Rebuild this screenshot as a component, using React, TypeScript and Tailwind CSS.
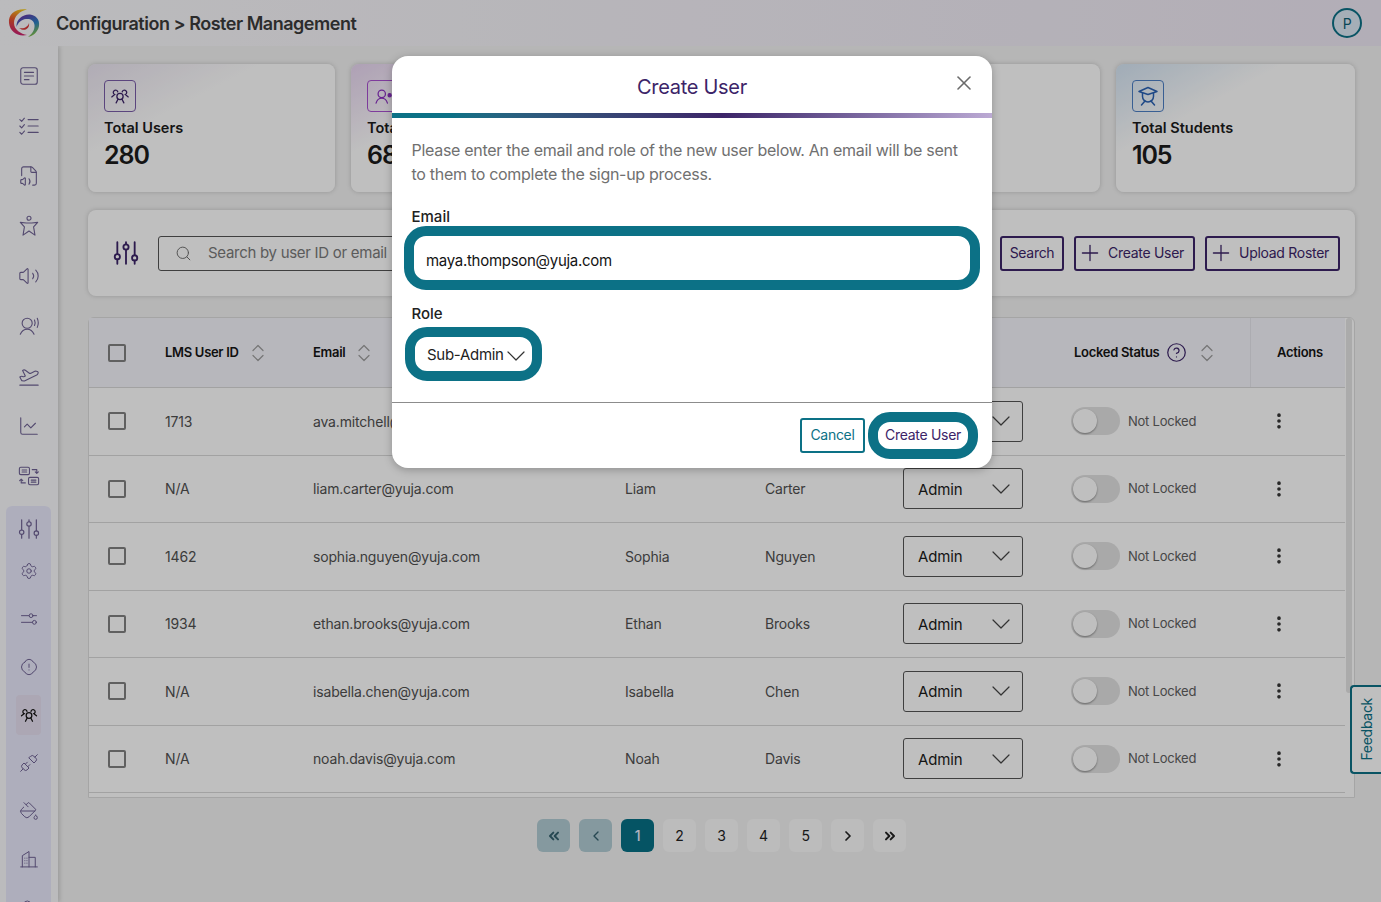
import React from 'react';
import {
    ChartLine,
    ChevronDown,
    ChevronLeft,
    ChevronRight,
    ChevronsLeft,
    ChevronsRight,
    CircleHelp,
    EllipsisVertical,
    FileVolume,
    PaintBucket,
    PlaneTakeoff,
    Plus,
    Search,
    Settings,
    Unplug,
    Volume2,
    X,
} from 'lucide-react';

type IconProps = { className?: string; strokeWidth?: number };

function GroupIcon({ className, strokeWidth = 1.4 }: IconProps) {
    return (
        <svg viewBox="0 0 24 24" fill="none" stroke="currentColor" strokeWidth={strokeWidth} strokeLinecap="round" className={className}>
            <circle cx="12" cy="12.500" r="3.400" />
            <path d="M9.800 15.500 7.800 19.500M14.200 15.500l2 4" />
            <path d="M9.600 7.600A2.500 2.500 0 1 0 6.200 10.400L3 13" />
            <path d="M14.400 7.600a2.500 2.500 0 1 1 3.400 2.800L21 13" />
        </svg>
    );
}

function PersonStarIcon({ className, strokeWidth = 1.4 }: IconProps) {
    return (
        <svg viewBox="0 0 24 24" fill="none" stroke="currentColor" strokeWidth={strokeWidth} strokeLinecap="round" className={className}>
            <circle cx="10" cy="9" r="4.200" />
            <path d="M3.500 19.500c1-3.500 3.400-5.500 6.500-5.500s5.500 2 6.500 5.500" />
            <circle cx="19" cy="10.500" r="1.800" fill="currentColor" />
        </svg>
    );
}

function StudentIcon({ className }: IconProps) {
    return (
        <svg viewBox="0 0 24 24" fill="none" stroke="currentColor" strokeWidth="1.500" strokeLinecap="round" strokeLinejoin="round" className={className}>
            <path d="M3 7.500 12 3.500l9 4-9 3z" />
            <path d="M6.500 9v3.500a5.500 5.500 0 0 0 11 0V9" />
            <path d="M9 17 5.500 21M15 17l3.500 4" />
        </svg>
    );
}

function SwapDocsIcon({ className, strokeWidth = 1.200 }: IconProps) {
    return (
        <svg viewBox="0 0 24 24" fill="none" stroke="currentColor" strokeWidth={strokeWidth} strokeLinecap="round" strokeLinejoin="round" className={className}>
            <rect x="1.500" y="2.500" width="11" height="8" rx="1.500" />
            <rect x="11.500" y="13.500" width="11" height="8" rx="1.500" />
            <path d="M4.500 5.500h5M4.500 7.700h5M14.500 16.500h5M14.500 18.700h5" />
            <path d="M15.500 5h5v4M18.800 7.500l1.700 1.700 1.700-1.700" />
            <path d="M8 19.500H3.500v-4M1.800 17l1.700-1.700L5.200 17" />
        </svg>
    );
}

function SpeakerPersonIcon({ className, strokeWidth = 1.300 }: IconProps) {
    return (
        <svg viewBox="0 0 24 24" fill="none" stroke="currentColor" strokeWidth={strokeWidth} strokeLinecap="round" className={className}>
            <circle cx="10" cy="9" r="5.500" />
            <path d="M2.500 21c1.500-3.500 4-5.500 7.500-5.500s6 2 7.500 5.500" />
            <path d="M18 5.500c.9 2 .9 4 0 6M21 3.500c1.400 3.200 1.400 6.800 0 10" />
        </svg>
    );
}

function NotesIcon({ className, strokeWidth = 1.300 }: IconProps) {
    return (
        <svg viewBox="0 0 24 24" fill="none" stroke="currentColor" strokeWidth={strokeWidth} strokeLinecap="round" className={className}>
            <rect x="3" y="3" width="18" height="18" rx="2.500" />
            <path d="M7 8h10M7 12h10M7 16h5" />
        </svg>
    );
}

function ChecklistIcon({ className, strokeWidth = 1.300 }: IconProps) {
    return (
        <svg viewBox="0 0 24 24" fill="none" stroke="currentColor" strokeWidth={strokeWidth} strokeLinecap="round" strokeLinejoin="round" className={className}>
            <path d="M11 5h11M11 12h11M11 19h11" />
            <path d="m2 5 2 2 3-3.500M2 12l2 2 3-3.500M2 19l2 2 3-3.500" />
        </svg>
    );
}

function AccessIcon({ className, strokeWidth = 1.300 }: IconProps) {
    return (
        <svg viewBox="0 0 24 24" fill="none" stroke="currentColor" strokeWidth={strokeWidth} strokeLinecap="round" strokeLinejoin="round" className={className}>
            <circle cx="12" cy="3.500" r="2.200" />
            <path d="M2.500 8 9 8.700h6l6.500-.7-4.500 5 1.500 9L12 17.500 5.500 22 7 13z" />
        </svg>
    );
}

function SlidersIcon({ className, strokeWidth = 1.300 }: IconProps) {
    return (
        <svg viewBox="0 0 24 24" fill="none" stroke="currentColor" strokeWidth={strokeWidth} strokeLinecap="round" className={className}>
            <path d="M4 2v11M4 18v4M12 2v2M12 9v13M20 2v12M20 19v3" />
            <circle cx="4" cy="15.500" r="2.400" />
            <circle cx="12" cy="6.500" r="2.400" />
            <circle cx="20" cy="16.500" r="2.400" />
        </svg>
    );
}

function TunerIcon({ className, strokeWidth = 1.300 }: IconProps) {
    return (
        <svg viewBox="0 0 24 24" fill="none" stroke="currentColor" strokeWidth={strokeWidth} strokeLinecap="round" className={className}>
            <path d="M3 8h9M17 8h4M3 16h13M21 16h0" />
            <circle cx="14.500" cy="8" r="2.300" />
            <circle cx="18.500" cy="16" r="2.300" />
        </svg>
    );
}

function AlertBadgeIcon({ className, strokeWidth = 1.300 }: IconProps) {
    return (
        <svg viewBox="0 0 24 24" fill="none" stroke="currentColor" strokeWidth={strokeWidth} strokeLinecap="round" strokeLinejoin="round" className={className}>
            <path d="M7 6a5.500 5.500 0 0 1 10 0 6.500 6.500 0 0 1 0 12 5.500 5.500 0 0 1-10 0 6.500 6.500 0 0 1 0-12z" />
            <path d="M12 8.500v4M12 15.500v.1" />
        </svg>
    );
}

function CampusIcon({ className, strokeWidth = 1.200 }: IconProps) {
    return (
        <svg viewBox="0 0 24 24" fill="none" stroke="currentColor" strokeWidth={strokeWidth} strokeLinecap="round" strokeLinejoin="round" className={className}>
            <path d="M2 21.500h20M4 21.500V8l8-5v18.500M12 10h7.500v11.500" />
            <path d="M7 11h.1M9.500 11h.1M7 14h.1M9.500 14h.1M7 17h.1M9.500 17h.1" />
        </svg>
    );
}

function YujaLogo() {
    return (
        <svg viewBox="0 0 32 30" className="h-[30px] w-[32px]">
            <defs>
                <linearGradient id="warm" x1="0.700" y1="0" x2="0.500" y2="1">
                    <stop offset="0" stopColor="#f2c81c" />
                    <stop offset="0.450" stopColor="#e8562a" />
                    <stop offset="1" stopColor="#c81e78" />
                </linearGradient>
                <linearGradient id="cool" x1="0.200" y1="0" x2="0.700" y2="1">
                    <stop offset="0" stopColor="#6a2fa6" />
                    <stop offset="0.550" stopColor="#2a7fc4" />
                    <stop offset="1" stopColor="#8cc63f" />
                </linearGradient>
            </defs>
            <path d="M19 1.500C8 0 0 6 1 15c1 9 9 14 18 12-6-1-13-5-13-12C6 8 12 3 19 1.500Z" fill="url(#warm)" />
            <path d="M8.500 19C8 11 15 6 22 6.500c6 .5 10 5.500 9 11.500-1 6-6 10-11 11 4-3 7-7 6.500-12C26 12 22 10.500 18 11c-5 .5-8 4-9.500 8Z" fill="url(#cool)" />
            <path d="M11 20c5 1 9-1 10-5 1 5-4 9.500-10 5Z" fill="#d83a3a" />
        </svg>
    );
}

function SortIcon() {
    return (
        <svg viewBox="0 0 12 18" className="h-[18px] w-3 shrink-0" fill="none" stroke="#9c9c9c" strokeWidth="1.200" strokeLinecap="round" strokeLinejoin="round">
            <path d="M1 6.500 6 1.500l5 5" />
            <path d="M1 11.500l5 5 5-5" />
        </svg>
    );
}

function StatCard({ label, value, width, tint, iconClass, icon }: { label: string; value: string; width: string; tint: string; iconClass: string; icon?: React.ReactNode }) {
    return (
        <div className={`h-[128px] rounded-lg px-4 pt-4 shadow-[0_0_5px_rgba(0,0,0,0.18)] ${width} ${tint}`}>
            {icon && <div className={`flex h-8 w-8 items-center justify-center rounded-[4px] border ${iconClass}`}>{icon}</div>}
            {label && <div className="mt-[5px] text-[14.500px] leading-[22px] font-semibold tracking-normal text-[#1b1b1b]">{label}</div>}
            {value && <div className="mt-[1px] text-[25px] leading-[30px] font-semibold tracking-[-1.100px] text-[#1b1b1b]">{value}</div>}
        </div>
    );
}

function OutlineButton({ children, className }: { children: React.ReactNode; className?: string }) {
    return (
        <button className={`flex h-[35px] items-center rounded-[3px] border-2 border-[#3c2468] pb-[2px] text-[14px] text-[#3c2468] ${className}`}>
            {children}
        </button>
    );
}

const rows = [
    { id: '1713', email: 'ava.mitchell@yuja.com', first: 'Ava', last: 'Mitchell' },
    { id: 'N/A', email: 'liam.carter@yuja.com', first: 'Liam', last: 'Carter' },
    { id: '1462', email: 'sophia.nguyen@yuja.com', first: 'Sophia', last: 'Nguyen' },
    { id: '1934', email: 'ethan.brooks@yuja.com', first: 'Ethan', last: 'Brooks' },
    { id: 'N/A', email: 'isabella.chen@yuja.com', first: 'Isabella', last: 'Chen' },
    { id: 'N/A', email: 'noah.davis@yuja.com', first: 'Noah', last: 'Davis' },
];

const rowGrid = 'grid grid-cols-[76px_148px_312px_140px_138px_168px_179px_1fr] items-center';

const topNav = [NotesIcon, ChecklistIcon, FileVolume, AccessIcon, Volume2, SpeakerPersonIcon, PlaneTakeoff, ChartLine, SwapDocsIcon];
const bottomNav = [TunerIcon, AlertBadgeIcon, GroupIcon, Unplug, PaintBucket, CampusIcon, PersonStarIcon];

function Sidebar() {
    return (
        <aside className="z-[1] w-[58px] shrink-0 bg-[#fafafd] pt-[5px] text-[#6f6294] shadow-[2px_0_4px_rgba(0,0,0,0.14)]">
            {topNav.map((Icon, i) => (
                <div key={i} className="flex h-[50px] items-center justify-center pr-px">
                    <Icon className="h-[22px] w-[22px]" strokeWidth={1.200} />
                </div>
            ))}
            <div className="mt-[5px] ml-[6px] h-[500px] w-[45px] overflow-hidden rounded-t-md bg-[#e9e9fb]">
                <div className="flex h-[46px] items-center justify-center">
                    <SlidersIcon className="h-[22px] w-[22px]" />
                </div>
                <div className="mb-[5px] flex h-[38px] items-center justify-center">
                    <Settings className="h-[18px] w-[18px]" strokeWidth={1.300} />
                </div>
                {bottomNav.map((Icon, i) => (
                    <div key={i} className="flex h-[48px] items-center justify-center">
                        {i === 2 ? (
                            <div className="flex h-10 w-[25px] items-center justify-center rounded bg-[#e6dff0] text-[#141414]">
                                <Icon className="h-[20px] w-[20px]" strokeWidth={1.500} />
                            </div>
                        ) : (
                            <Icon className="h-[20px] w-[20px]" strokeWidth={1.200} />
                        )}
                    </div>
                ))}
            </div>
        </aside>
    );
}

function RosterTable() {
    return (
        <div className="mt-[21px] h-[481px] rounded-t-md border border-[#dcdcdc] bg-white">
            <div className="relative">
                <div className="absolute top-0 right-[2px] h-[375px] w-[6px] rounded-full bg-[#e4e4e4]" />
                <div className={`${rowGrid} mr-[9px] h-[70px] border-b border-[#d9d9d9] bg-[#f5f5fb] text-[13px] font-semibold tracking-[-0.3px] text-[#141414]`}>
                    <div className="pl-[19px]"><div className="h-[18px] w-[18px] rounded-[2px] border-2 border-[#808080]" /></div>
                    <div className="flex items-center gap-[13px]">LMS User ID <SortIcon /></div>
                    <div className="flex items-center gap-[13px]">Email <SortIcon /></div>
                    <div>First Name</div>
                    <div>Last Name</div>
                    <div>Role</div>
                    <div className="flex items-center pl-[3px]">
                        Locked Status
                        <CircleHelp className="mr-[14px] ml-[7px] h-[21px] w-[21px] text-[#3c2468]" strokeWidth={1.400} />
                        <SortIcon />
                    </div>
                    <div className="flex h-full items-center border-l border-[#e6e6ec] pl-[26px]">Actions</div>
                </div>
                {rows.map((row, i) => (
                    <div key={i} className={`${rowGrid} mr-[9px] h-[67.500px] border-b border-[#d9d9d9] text-[14px] tracking-[-0.012em] text-[#505050]`}>
                        <div className="pl-[19px]"><div className="h-[18px] w-[18px] rounded-[2px] border-2 border-[#808080]" /></div>
                        <div>{row.id}</div>
                        <div>{row.email}</div>
                        <div>{row.first}</div>
                        <div>{row.last}</div>
                        <div className="flex h-[41px] w-[120px] items-center justify-between overflow-hidden rounded-[3px] border border-[#555] pt-[2px] pr-[5px] pl-[14px] text-[15px] text-[#1b1b1b]">
                            Admin
                            <ChevronDown className="-mt-[2px] h-8 w-8 text-[#444]" strokeWidth={0.900} />
                        </div>
                        <div className="flex items-center gap-2 text-[13px] tracking-[-0.018em] text-[#606060]">
                            <div className="h-[28px] w-[49px] rounded-full bg-[#e2e2e2] p-[2px]">
                                <div className="h-6 w-6 rounded-full bg-white shadow-[0_1px_2px_rgba(0,0,0,0.4)]" />
                            </div>
                            Not Locked
                        </div>
                        <div className="pl-[19px]">
                            <EllipsisVertical className="h-[20px] w-[20px] text-[#333]" strokeWidth={2.400} />
                        </div>
                    </div>
                ))}
            </div>
        </div>
    );
}

function Pagination() {
    const box = 'flex h-[33px] w-[33px] items-center justify-center rounded-md';
    return (
        <div className="mt-[21px] flex justify-center gap-[9px] text-[14px] text-[#222]">
            <div className={`${box} bg-[#b2ccd4] text-[#33606e]`}><ChevronsLeft className="h-4 w-4" strokeWidth={3} /></div>
            <div className={`${box} bg-[#b2ccd4] text-[#33606e]`}><ChevronLeft className="h-4 w-4" strokeWidth={2} /></div>
            <div className={`${box} bg-[#077186] font-medium text-[#eef]`}>1</div>
            {['2', '3', '4', '5'].map((n) => (
                <div key={n} className={`${box} bg-[#fbfbfb]`}>{n}</div>
            ))}
            <div className={`${box} bg-[#fbfbfb]`}><ChevronRight className="h-4 w-4" strokeWidth={2.600} /></div>
            <div className={`${box} bg-[#fbfbfb]`}><ChevronsRight className="h-4 w-4" strokeWidth={3} /></div>
        </div>
    );
}

function CreateUserModal() {
    return (
        <div className="absolute top-[56px] left-[392px] z-20 h-[412px] w-[600px] overflow-hidden rounded-2xl bg-white shadow-[0_2px_8px_rgba(0,0,0,0.25)]">
            <div className="relative flex h-[57px] items-center justify-center pt-1 text-[20px] text-[#3c2468]">
                Create User
                <X className="absolute top-[15px] right-[16px] h-6 w-6 text-[#6b6b6b]" strokeWidth={1.600} />
            </div>
            <div className="h-[5px] bg-linear-to-r from-[#0c7186] from-10% via-[#3c2468] via-55% to-[#bcaad4]" />
            <p className="mt-5 pr-[30px] pl-[19.500px] text-[16px] leading-6 text-[#707070]">
                Please enter the email and role of the new user below. An email will be sent to them to complete the sign-up process.
            </p>
            <div className="mt-5 pl-[19.500px] text-[15px] leading-[22px] font-medium tracking-normal text-[#222]">Email</div>
            <div className="mx-3 mt-[-2px] h-[64px] rounded-[22px] border-[10px] border-[#0c7186] bg-white pt-[14px] pl-[12px] text-[15px] leading-[22px] text-[#141414]">
                maya.thompson@yuja.com
            </div>
            <div className="mt-[13px] pl-[19.500px] text-[15px] leading-[22px] font-medium tracking-normal text-[#222]">Role</div>
            <div className="mt-[2px] ml-[13px] flex h-[54px] w-[137px] items-center overflow-hidden rounded-[22px] border-[10px] border-[#0c7186] pt-[3px] pl-[12px] text-[15px] text-[#222]">
                Sub-Admin
                <ChevronDown className="-ml-[4px] h-8 w-8 shrink-0 text-[#333]" strokeWidth={0.900} />
            </div>
            <div className="mt-[21px] flex h-[66px] items-center justify-end border-t border-[#8c8c8c] pr-[14px]">
                <button className="mr-[3px] h-[35px] w-[65px] rounded-[3px] border-2 border-[#0c7186] pb-[2px] text-[14px] text-[#0c7186]">Cancel</button>
                <button className="h-[47px] w-[110px] rounded-[22px] border-[10px] border-[#0c7186] pb-[2px] text-[14px] text-[#3c2468]">Create User</button>
            </div>
        </div>
    );
}

export default function App() {
    return (
        <div className="relative h-[902px] w-[1381px] overflow-hidden bg-[#f3f3f3] font-['Inter',sans-serif] tracking-[-0.018em]">
            <header className="relative z-[2] flex h-[46px] items-center bg-linear-to-r from-[#fafafc] to-[#eee8f4] pr-[19px] pl-2">
                <YujaLogo />
                <h1 className="ml-4 flex-1 text-[18px] font-semibold tracking-[-0.48px] text-[#3b3b3b]">Configuration &gt; Roster Management</h1>
                <div className="flex h-[30px] w-[30px] items-center justify-center rounded-full border-2 border-[#0c7186] bg-[#dde8f5] text-[14px] text-[#0c5f73]">P</div>
            </header>
            <div className="flex h-[856px]">
                <Sidebar />
                <main className="flex-1 pt-[18px] pr-[26px] pl-[30px]">
                    <div className="flex gap-4">
                        <StatCard
                            label="Total Users"
                            value="280"
                            width="w-[247px]"
                            tint="bg-linear-to-br from-[#ece6f2] to-white to-35%"
                            iconClass="border-[#7a5ca8] text-[#3c2468]"
                            icon={<GroupIcon className="h-[22px] w-[22px]" />}
                        />
                        <StatCard
                            label="Total Instructors"
                            value="68"
                            width="flex-1"
                            tint="bg-linear-to-br from-[#e9d6f2] to-white to-35%"
                            iconClass="border-[#a84fd0] text-[#8a2fc0]"
                            icon={<PersonStarIcon className="h-[21px] w-[21px]" />}
                        />
                        <StatCard label="" value="" width="flex-1" tint="bg-white" iconClass="" />
                        <StatCard label="" value="" width="flex-1" tint="bg-white" iconClass="" />
                        <StatCard
                            label="Total Students"
                            value="105"
                            width="flex-1"
                            tint="bg-linear-to-br from-[#d6e6f5] to-white to-35%"
                            iconClass="border-[#4c7fc4] text-[#2a62b4]"
                            icon={<StudentIcon className="h-6 w-6" />}
                        />
                    </div>
                    <div className="mt-[18px] flex h-[86px] items-center rounded-lg bg-white pr-[15px] pl-[25px] shadow-[0_0_5px_rgba(0,0,0,0.18)]">
                        <SlidersIcon className="h-[26px] w-[26px] text-[#3c2468]" strokeWidth={1.700} />
                        <div className="mr-[10px] ml-[19px] flex h-[35px] flex-1 items-center rounded-[3px] border border-[#555] pl-4 text-[15px] text-[#7a7a7a]">
                            <Search className="mr-[16px] h-[17px] w-[17px] text-[#707070]" strokeWidth={1.400} />
                            Search by user ID or email
                        </div>
                        <div className="flex gap-[10px]">
                            <OutlineButton className="w-[64px] justify-center">Search</OutlineButton>
                            <OutlineButton className="w-[121px] gap-[5px] pl-px"><Plus className="mt-[2px] h-[26px] w-[26px]" strokeWidth={1.200} />Create User</OutlineButton>
                            <OutlineButton className="w-[135px] gap-[5px] pl-px"><Plus className="mt-[2px] h-[26px] w-[26px]" strokeWidth={1.200} />Upload Roster</OutlineButton>
                        </div>
                    </div>
                    <RosterTable />
                    <Pagination />
                </main>
            </div>
            <div className="absolute top-[685px] right-0 z-[3] flex h-[89px] w-[31px] items-center justify-center rounded-l-[4px] border-2 border-r-0 border-[#0c7186] bg-white text-[14px] text-[#0c7186]">
                <span className="rotate-180 [writing-mode:vertical-rl]">Feedback</span>
            </div>
            <div className="absolute inset-0 z-10 bg-black/25" />
            <CreateUserModal />
        </div>
    );
}
